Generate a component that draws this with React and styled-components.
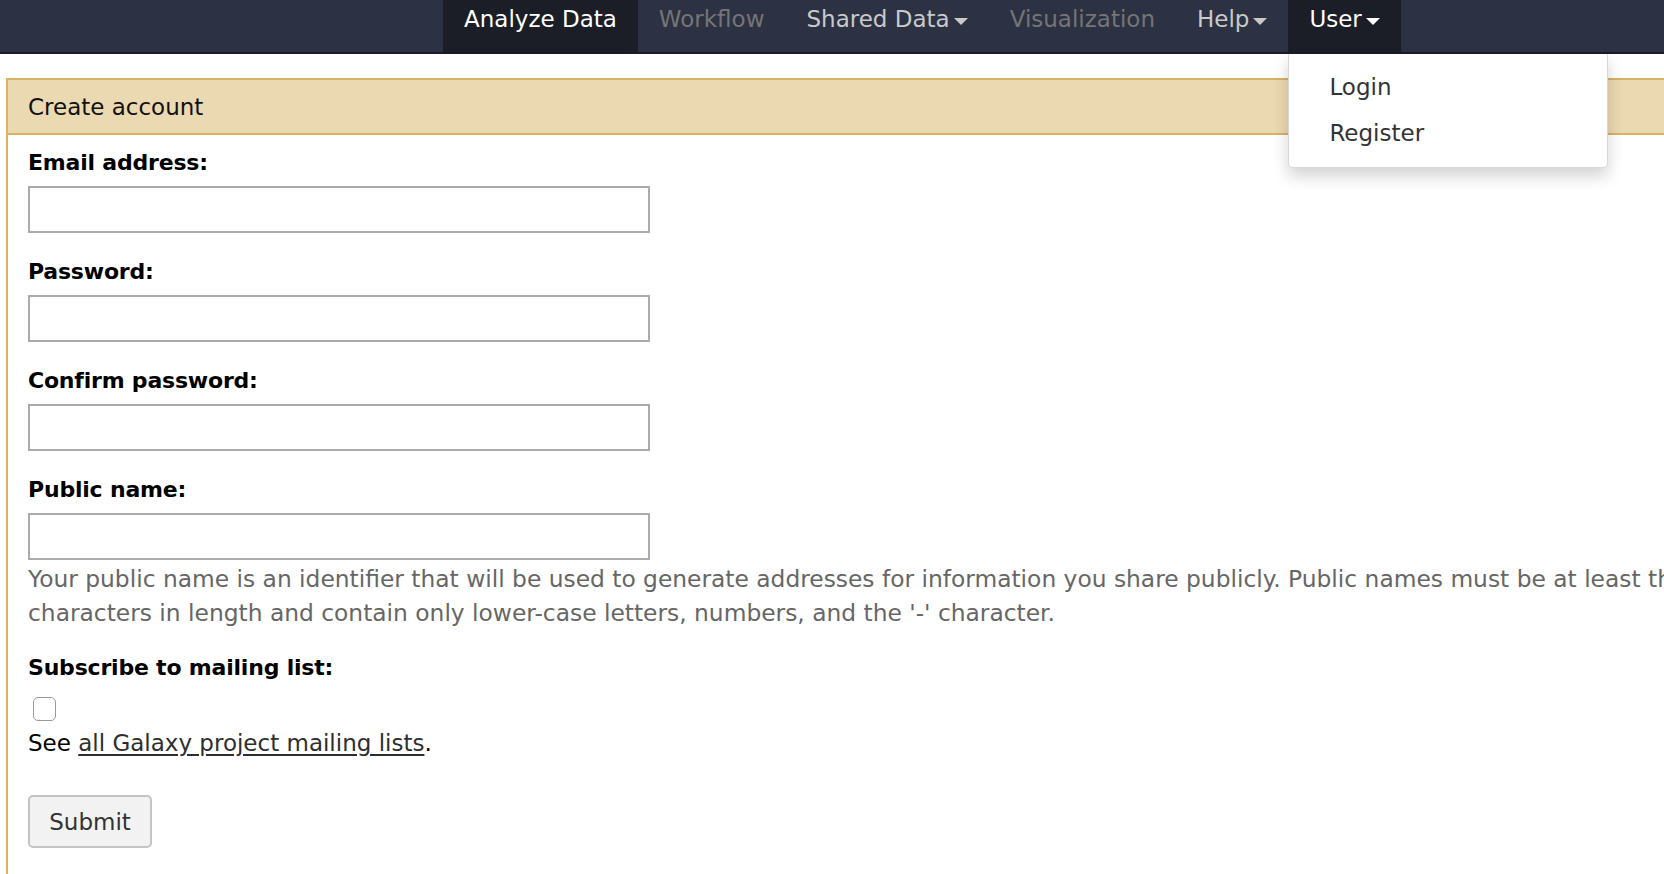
import React from "react";
import styled, { createGlobalStyle } from "styled-components";

const GlobalStyle = createGlobalStyle`
  html, body {
    margin: 0;
    padding: 0;
    overflow: hidden;
    background: #ffffff;
  }

  body {
    font-family: "DejaVu Sans", Verdana, sans-serif;
    font-size: 23px;
    color: #111;
  }
`;

const tabs = [
  { label: "Analyze Data", state: "active" },
  { label: "Workflow", state: "disabled" },
  { label: "Shared Data", state: "normal", caret: true },
  { label: "Visualization", state: "disabled" },
  { label: "Help", state: "normal", caret: true },
  { label: "User", state: "active", caret: true, open: true },
];

const fields = [
  { label: "Email address:", type: "text" },
  { label: "Password:", type: "password" },
  { label: "Confirm password:", type: "password" },
];

const App = () => {
  return (
    <Page>
      <GlobalStyle />
      <Masthead>
        <NavList>
          {tabs.map((tab) => (
            <NavItem key={tab.label} $state={tab.state}>
              {tab.label}
              {tab.caret && <Caret />}
              {tab.open && (
                <Dropdown>
                  <DropdownItem>Login</DropdownItem>
                  <DropdownItem>Register</DropdownItem>
                </Dropdown>
              )}
            </NavItem>
          ))}
        </NavList>
      </Masthead>

      <Panel>
        <PanelTitle>Create account</PanelTitle>
        <PanelBody>
          {fields.map((field) => (
            <FormRow key={field.label}>
              <Label>{field.label}</Label>
              <TextInput type={field.type} />
            </FormRow>
          ))}

          <FormRow $tight>
            <Label>Public name:</Label>
            <TextInput type="text" />
            <HelpText>
              Your public name is an identifier that will be used to generate
              addresses for information you share publicly. Public names must be
              at least three characters in length and contain only lower-case
              letters, numbers, and the '-' character.
            </HelpText>
          </FormRow>

          <FormRow>
            <Label>Subscribe to mailing list:</Label>
            <Checkbox type="checkbox" />
            <Note>
              See <NoteLink href="#">all Galaxy project mailing lists</NoteLink>.
            </Note>
          </FormRow>

          <SubmitButton type="button">Submit</SubmitButton>
        </PanelBody>
      </Panel>
    </Page>
  );
};

const Page = styled.div`
  width: 1664px;
  height: 874px;
  overflow: hidden;
`;

const Masthead = styled.div`
  height: 52px;
  background-color: #2c3143;
  border-bottom: 2px solid #1a1b25;
`;

const NavList = styled.ul`
  display: flex;
  height: 100%;
  margin: 0;
  padding: 0 0 0 443px;
  list-style: none;
`;

const navColors = {
  active: "#ffffff",
  normal: "#c9c9c9",
  disabled: "#757575",
};

const NavItem = styled.li`
  position: relative;
  display: flex;
  align-items: center;
  padding: 0 21px 14px 21px;
  font-size: 23px;
  color: ${(p) => navColors[p.$state]};
  background-color: ${(p) => (p.$state === "active" ? "#1b1d27" : "transparent")};
  white-space: nowrap;
`;

const Caret = styled.span`
  display: inline-block;
  width: 0;
  height: 0;
  margin-left: 4px;
  margin-top: 4px;
  border-top: 7px solid currentColor;
  border-left: 7px solid transparent;
  border-right: 7px solid transparent;
`;

const Dropdown = styled.ul`
  position: absolute;
  top: 54px;
  left: 0;
  z-index: 10;
  width: 318px;
  margin: 0;
  padding: 10px 0 11px;
  list-style: none;
  background-color: #ffffff;
  border: 1px solid rgba(0, 0, 0, 0.15);
  border-top: none;
  border-radius: 0 0 5px 5px;
  box-shadow: 0 8px 16px rgba(0, 0, 0, 0.18);
`;

const DropdownItem = styled.li`
  padding: 6px 40px;
  line-height: 34px;
  font-size: 23px;
  color: #333333;
`;

const Panel = styled.div`
  width: 1800px;
  height: 900px;
  margin: 24px 0 0 6px;
  border-left: 2px solid #d8b365;
`;

const PanelTitle = styled.div`
  box-sizing: border-box;
  height: 57px;
  padding: 2px 20px 0;
  line-height: 51px;
  font-size: 23px;
  color: #111;
  background-color: #ebd9b2;
  border-top: 2px solid #d8b365;
  border-bottom: 2px solid #d8b365;
`;

const PanelBody = styled.div`
  width: 1730px;
  padding: 14px 20px;
`;

const FormRow = styled.div`
  margin-bottom: ${(p) => (p.$tight ? "24px" : "25px")};
`;

const Label = styled.label`
  display: block;
  font-size: 22px;
  font-weight: bold;
  letter-spacing: -0.2px;
  line-height: 28px;
  color: #000;
`;

const TextInput = styled.input`
  display: block;
  box-sizing: border-box;
  width: 622px;
  height: 47px;
  margin-top: 9px;
  padding: 4px 8px;
  font-family: inherit;
  font-size: 23px;
  border: 2px solid #ababab;
  border-radius: 0;
  background: #fff;
  outline: none;
`;

const HelpText = styled.div`
  margin-top: 2px;
  line-height: 34px;
  font-size: 23.35px;
  color: #666666;
`;

const Checkbox = styled.input`
  appearance: none;
  display: block;
  box-sizing: border-box;
  width: 23px;
  height: 24px;
  margin: 15px 0 0 5px;
  border: 1.5px solid #9a9a9a;
  border-radius: 5px;
  background: #fff;
`;

const Note = styled.div`
  margin-top: 8px;
  line-height: 28px;
  font-size: 23px;
  color: #000;
`;

const NoteLink = styled.a`
  color: #2e2e2e;
  text-decoration: underline;
  text-underline-offset: 3px;
`;

const SubmitButton = styled.button`
  display: block;
  box-sizing: border-box;
  width: 124px;
  height: 53px;
  margin-top: 38px;
  padding: 0;
  font-family: inherit;
  font-size: 23px;
  color: #333333;
  background-color: #f2f2f2;
  border: 2px solid #c4c4c4;
  border-radius: 5px;
`;

export default App;
